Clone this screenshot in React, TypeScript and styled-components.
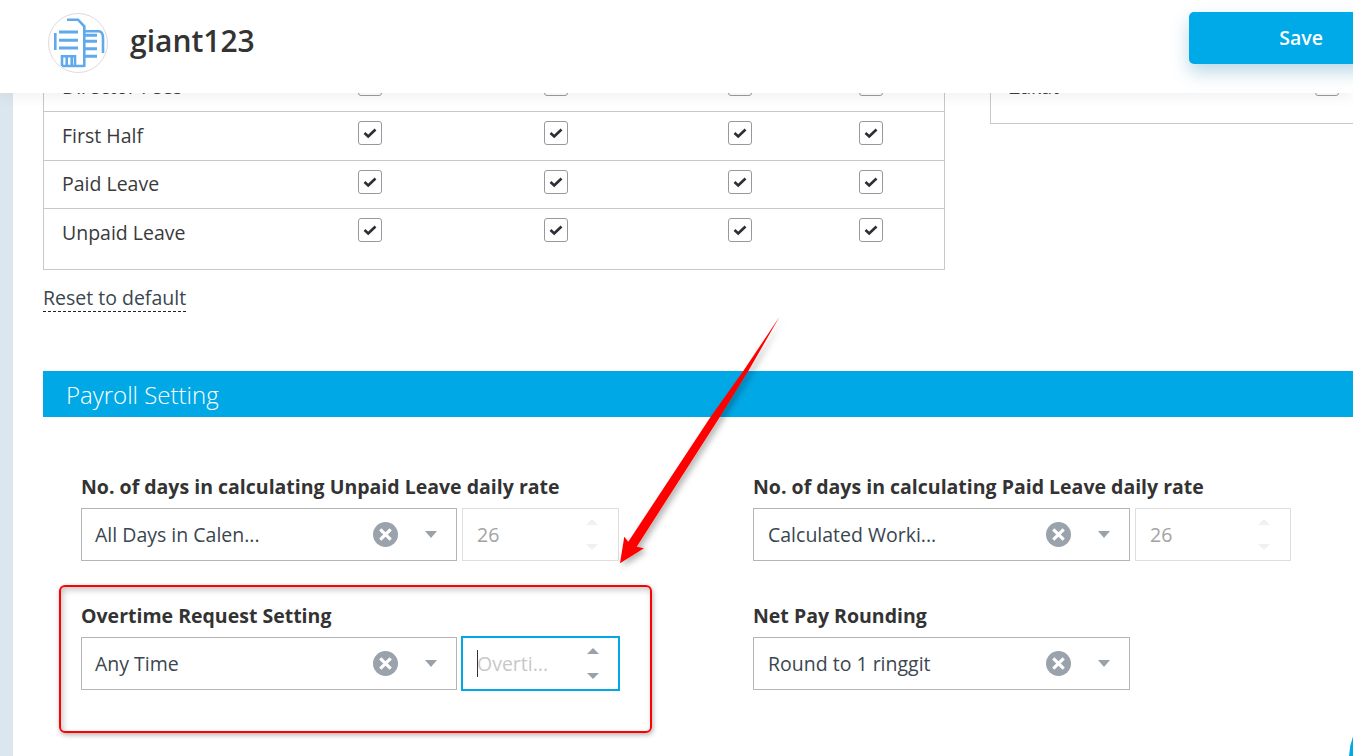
import React from "react";
import styled, { createGlobalStyle } from "styled-components";

const GlobalStyle = createGlobalStyle`
  html, body {
    margin: 0;
    padding: 0;
    height: 756px;
    overflow: hidden;
    background: #fff;
    font-family: "Open Sans", "Liberation Sans", sans-serif;
    color: #333;
  }
`;

const Page = styled.div`
  position: relative;
  width: 1353px;
  height: 756px;
  overflow: hidden;
  display: flex;
`;

const SideStrip = styled.div`
  width: 13px;
  flex: none;
  background: #dce6ef;
`;

const Main = styled.main`
  flex: 1;
  min-width: 0;
  padding: 63px 0 0 30px;
  background: #fff;
`;

const TopBar = styled.header`
  position: absolute;
  top: 0;
  left: 0;
  right: 0;
  height: 93px;
  background: #fff;
  box-shadow: 0 2px 14px rgba(60, 70, 80, 0.09);
  display: flex;
  align-items: flex-start;
  padding: 13px 0 0 48px;
  gap: 22px;
  z-index: 5;
  box-sizing: border-box;
`;

const Avatar = styled.div`
  width: 60px;
  height: 60px;
  box-sizing: border-box;
  border: 1px solid #dcdcdc;
  border-radius: 50%;
  overflow: hidden;
  flex: none;
`;

const CompanyName = styled.div`
  font-size: 30px;
  font-weight: 600;
  line-height: 41px;
  color: #333;
  margin-top: 7px;
`;

const SaveButton = styled.button`
  position: absolute;
  left: 1189px;
  top: 12px;
  width: 190px;
  height: 52px;
  border: 0;
  border-radius: 5px;
  background: #00a9e8;
  color: #fff;
  font: 600 19.5px "Open Sans", sans-serif;
  padding: 0 56px 2px 0;
  text-align: right;
  box-shadow: 0 8px 18px rgba(0, 120, 170, 0.28);
`;

const TablesRow = styled.div`
  display: flex;
  align-items: flex-start;
  gap: 45px;
`;

const TableBox = styled.div<{ $width: number }>`
  width: ${(p) => p.$width}px;
  flex: none;
  box-sizing: border-box;
  border: 1px solid #c8c8c8;
  border-top: 0;
`;

const Row = styled.div<{ $height: number; $last?: boolean }>`
  height: ${(p) => p.$height}px;
  box-sizing: border-box;
  display: flex;
  align-items: flex-start;
  border-bottom: ${(p) => (p.$last ? "0" : "1px solid #c8c8c8")};
`;

const RowLabel = styled.div<{ $top: number; $width?: number }>`
  width: ${(p) => p.$width ?? 314}px;
  padding-left: 18px;
  padding-top: ${(p) => p.$top}px;
  box-sizing: border-box;
  font-size: 19.5px;
  line-height: 26px;
  color: #3a3a3a;
  flex: none;
`;

const CheckCell = styled.div<{ $width: number }>`
  width: ${(p) => p.$width}px;
  padding-top: 9px;
  flex: none;
`;

const Check = styled.div`
  width: 24px;
  height: 24px;
  box-sizing: border-box;
  border: 1px solid #999;
  border-radius: 3px;
  background: #fff;
  display: flex;
  align-items: center;
  justify-content: center;
`;

const ResetLink = styled.a`
  display: block;
  width: fit-content;
  margin-top: 15px;
  font-size: 19.5px;
  line-height: 26px;
  color: #3a4650;
  border-bottom: 1px dashed #222;
`;

const SectionBar = styled.div`
  height: 46px;
  margin-top: 59px;
  background: #00a8e6;
  color: #fff;
  font-size: 24px;
  font-weight: 300;
  line-height: 48px;
  padding-left: 23px;
`;

const SettingsGrid = styled.div`
  display: grid;
  grid-template-columns: 672px 560px;
  row-gap: 42px;
  padding: 57px 0 0 38px;
`;

const FieldLabel = styled.div`
  font-size: 19.5px;
  font-weight: 700;
  line-height: 26px;
  color: #333;
  margin-bottom: 8px;
  white-space: nowrap;
`;

const FieldRow = styled.div`
  width: 538px;
  display: flex;
  gap: 5px;
  align-items: center;
  height: 53px;
`;

const Select = styled.div<{ $wide?: boolean }>`
  width: ${(p) => (p.$wide ? 377 : 376)}px;
  height: 53px;
  box-sizing: border-box;
  border: 1px solid #b5b5b5;
  display: flex;
  align-items: center;
  padding: 0 19px 0 ${(p) => (p.$wide ? 14 : 13)}px;
  flex: none;
`;

const SelectValue = styled.div`
  flex: 1;
  font-size: 19.5px;
  color: #3a4650;
  white-space: nowrap;
`;

const ClearIcon = styled.svg`
  width: 25px;
  height: 25px;
  margin-right: 27px;
  flex: none;
`;

const Caret = styled.div`
  width: 0;
  height: 0;
  border-left: 6.5px solid transparent;
  border-right: 6.5px solid transparent;
  border-top: 7px solid #99a1a9;
  flex: none;
`;

const NumberBox = styled.div`
  flex: 1;
  height: 53px;
  box-sizing: border-box;
  border: 1px solid #dedede;
  display: flex;
  align-items: center;
  padding: 0 20px 0 14px;
`;

const FocusedNumberBox = styled.div`
  width: 159px;
  height: 55px;
  margin-left: -1px;
  box-sizing: border-box;
  border: 2px solid #00a8e6;
  display: flex;
  align-items: center;
  padding: 0 19px 0 14px;
  flex: none;
`;

const NumberValue = styled.div`
  flex: 1;
  font-size: 19.5px;
  color: #a3a3a3;
`;

const Placeholder = styled.div`
  flex: 1;
  display: flex;
  align-items: center;
  font-size: 19.5px;
  color: #c8c8c8;
  white-space: nowrap;

  &::before {
    content: "";
    width: 1px;
    height: 27px;
    margin-right: -1px;
    background: #333;
  }
`;

const Spinner = styled.div`
  display: flex;
  flex-direction: column;
  gap: 19px;
  align-items: center;
`;

const SpinArrow = styled.div<{ $up?: boolean; $muted?: boolean }>`
  width: 0;
  height: 0;
  border-left: 6.5px solid transparent;
  border-right: 6.5px solid transparent;
  ${(p) => (p.$up ? "border-bottom" : "border-top")}: 6px solid ${(p) =>
    p.$muted ? "#f0f0f0" : "#99a1a9"};
`;

const RedFrame = styled.div`
  position: absolute;
  left: 59px;
  top: 585px;
  width: 593px;
  height: 148px;
  box-sizing: border-box;
  border: 2px solid #f00;
  border-radius: 6px;
  box-shadow: 1px 2px 5px rgba(0, 0, 0, 0.3), inset 2px 3px 6px rgba(0, 0, 0, 0.22);
  pointer-events: none;
`;

const ArrowSvg = styled.svg`
  position: absolute;
  left: 600px;
  top: 300px;
  width: 200px;
  height: 280px;
  pointer-events: none;
  overflow: visible;
`;

const ChatBubble = styled.div`
  position: absolute;
  left: 1349px;
  top: 698px;
  width: 120px;
  height: 120px;
  border-radius: 50%;
  background: #00a8e6;
`;

const CheckMark = () => (
  <svg width="14" height="12" viewBox="0 0 14 12">
    <path d="M1.5 6 L5.2 9.4 L12.5 2.5" fill="none" stroke="#2c3036" strokeWidth="2.7" />
  </svg>
);

const ClearButton = () => (
  <ClearIcon viewBox="0 0 24 24">
    <circle cx="12" cy="12" r="12" fill="#9aa3ab" />
    <path d="M7 7 L17 17 M17 7 L7 17" stroke="#fff" strokeWidth="3" />
  </ClearIcon>
);

const BuildingLogo = () => (
  <svg width="58" height="58" viewBox="1 1 58 58">
    <g fill="none" stroke="#5fa9ec" strokeWidth="2.6">
      <path d="M19 6.7 H30 L36.3 13.3 V54" />
      <path d="M7.3 20 V37" />
      <path d="M11 19 H30 M11 27.3 H30 M11 35 H30" strokeWidth="3" />
      <path d="M36 18.3 H51 Q55 19 55 25 V40" />
      <path d="M36 22.3 H49 M37 28.3 H49 M37 35.7 H49 M37 43.3 H49" strokeWidth="3" />
      <path d="M14 53 V43.3 H27 V53 M18.7 44 V53 M23.7 44 V53" />
      <path d="M14 53 H36" />
    </g>
  </svg>
);

const ChecksRow: React.FC<{ label: string; height: number; labelTop: number; last?: boolean }> = ({
  label,
  height,
  labelTop,
  last,
}) => (
  <Row $height={height} $last={last}>
    <RowLabel $top={labelTop}>{label}</RowLabel>
    {[186, 184, 131, 24].map((w) => (
      <CheckCell key={w} $width={w}>
        <Check>
          <CheckMark />
        </Check>
      </CheckCell>
    ))}
  </Row>
);

const SelectField: React.FC<{ value: string; wide?: boolean }> = ({ value, wide }) => (
  <Select $wide={wide}>
    <SelectValue>{value}</SelectValue>
    <ClearButton />
    <Caret />
  </Select>
);

const DisabledNumber = () => (
  <NumberBox>
    <NumberValue>26</NumberValue>
    <Spinner>
      <SpinArrow $up $muted />
      <SpinArrow $muted />
    </Spinner>
  </NumberBox>
);

const App: React.FC = () => (
  <Page>
    <GlobalStyle />
    <SideStrip />
    <Main>
      <TablesRow>
        <TableBox $width={902}>
          <ChecksRow label="Director Fees" height={49} labelTop={11} />
          <ChecksRow label="First Half" height={49} labelTop={11} />
          <ChecksRow label="Paid Leave" height={48} labelTop={10} />
          <ChecksRow label="Unpaid Leave" height={60} labelTop={11} last />
        </TableBox>
        <TableBox $width={400}>
          <Row $height={60} $last>
            <RowLabel $top={11} $width={324}>
              Zakat
            </RowLabel>
            <CheckCell $width={24}>
              <Check />
            </CheckCell>
          </Row>
        </TableBox>
      </TablesRow>
      <ResetLink>Reset to default</ResetLink>
      <SectionBar>Payroll Setting</SectionBar>
      <SettingsGrid>
        <div>
          <FieldLabel>No. of days in calculating Unpaid Leave daily rate</FieldLabel>
          <FieldRow>
            <SelectField value="All Days in Calen..." />
            <DisabledNumber />
          </FieldRow>
        </div>
        <div>
          <FieldLabel>No. of days in calculating Paid Leave daily rate</FieldLabel>
          <FieldRow>
            <SelectField wide value="Calculated Worki..." />
            <DisabledNumber />
          </FieldRow>
        </div>
        <div>
          <FieldLabel>Overtime Request Setting</FieldLabel>
          <FieldRow>
            <SelectField value="Any Time" />
            <FocusedNumberBox>
              <Placeholder>Overti...</Placeholder>
              <Spinner>
                <SpinArrow $up />
                <SpinArrow />
              </Spinner>
            </FocusedNumberBox>
          </FieldRow>
        </div>
        <div>
          <FieldLabel>Net Pay Rounding</FieldLabel>
          <FieldRow>
            <SelectField wide value="Round to 1 ringgit" />
          </FieldRow>
        </div>
      </SettingsGrid>
    </Main>
    <TopBar>
      <Avatar>
        <BuildingLogo />
      </Avatar>
      <CompanyName>giant123</CompanyName>
      <SaveButton>Save</SaveButton>
    </TopBar>
    <RedFrame />
    <ArrowSvg viewBox="0 0 200 280">
      <defs>
        <filter id="arrowShadow" x="-30%" y="-10%" width="160%" height="120%">
          <feDropShadow dx="3" dy="3" stdDeviation="3" floodColor="#000" floodOpacity="0.3" />
        </filter>
      </defs>
      <path
        d="M179.5 16.7 L148.3 71 L120 116.7 L36.7 246.7 L44 248.3 L20 263.3 L24.3 236.7 L28.3 241.7 L110.7 116.7 L143.3 71 Z"
        fill="#f00"
        filter="url(#arrowShadow)"
      />
    </ArrowSvg>
    <ChatBubble />
  </Page>
);

export default App;
